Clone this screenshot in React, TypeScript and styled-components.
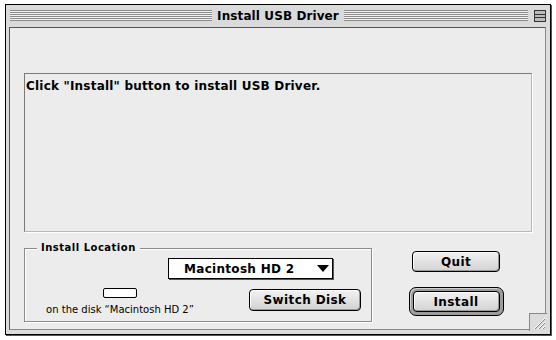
import styled, { createGlobalStyle } from 'styled-components'

const Global = createGlobalStyle`
	body {
		margin: 0;
		background: #ffffff;
		font-family: "DejaVu Sans", "Liberation Sans", sans-serif;
	}
`

const Page = styled.div`
	width: 556px;
	height: 340px;
	padding: 4px 0 0 5px;
	box-sizing: border-box;
`

const Window = styled.div`
	position: relative;
	width: 546px;
	height: 331px;
	box-sizing: border-box;
	border: 1px solid #000;
	box-shadow: 1px 1px 0 #555;
	background: #dcdcdc;
	display: flex;
	flex-direction: column;
`

const TitleBar = styled.div`
	height: 21px;
	display: grid;
	grid-template-columns: 1fr auto 1fr;
	align-items: center;
	padding: 0 4px;
	background: #dadada;
`

const TitleSide = styled.div`
	display: flex;
	align-items: center;
	gap: 6px;
`

const Stripes = styled.div`
	flex: 1;
	height: 11px;
	background: repeating-linear-gradient(
		to bottom,
		#8a8a8a 0px,
		#8a8a8a 1px,
		#f4f4f4 1px,
		#f4f4f4 2px
	);
`

const Title = styled.div`
	font-weight: bold;
	font-size: 12px;
	letter-spacing: 0.1px;
	color: #000;
	padding: 0 5px;
	white-space: nowrap;
`

const CollapseBox = styled.div`
	width: 10px;
	height: 10px;
	border: 1px solid #333;
	background: linear-gradient(to bottom, #bbb 0, #bbb 3px, #333 3px, #333 4px, #bbb 4px, #bbb 6px, #333 6px, #333 7px, #bbb 7px);
`

const Frame = styled.div`
	flex: 1;
	margin: 1px 4px 4px 3px;
	border: 1px solid #555;
	border-right-color: #888;
	border-bottom-color: #888;
	background: #ececec;
	display: flex;
	flex-direction: column;
	padding: 45px 13px 7px 14px;
	box-sizing: border-box;
`

const MessageBox = styled.div`
	height: 159px;
	box-sizing: border-box;
	border: 1px solid #7a7a7a;
	border-right-color: #b8b8b8;
	border-bottom-color: #b8b8b8;
	box-shadow: 1px 1px 0 #fff;
	padding: 5px 0 0 1px;
	font-weight: bold;
	font-size: 12px;
	letter-spacing: 0.2px;
	color: #000;
`

const BottomRow = styled.div`
	display: flex;
	margin-top: 16px;
`

const Group = styled.div`
	position: relative;
	width: 348px;
	height: 74px;
	box-sizing: border-box;
	border: 1px solid #8c8c8c;
	box-shadow: 1px 1px 0 #fff inset, 1px 1px 0 #fff;
	display: flex;
	flex-direction: column;
`

const GroupLabel = styled.div`
	position: absolute;
	left: 12px;
	top: -7px;
	padding: 0 4px;
	background: #ececec;
	font-weight: bold;
	font-size: 10px;
	letter-spacing: 0.5px;
	color: #000;
`

const PopupRow = styled.div`
	padding: 9px 0 0 143px;
	display: flex;
`

const Popup = styled.div`
	width: 165px;
	height: 21px;
	box-sizing: border-box;
	border: 1px solid #000;
	box-shadow: 1px 1px 0 #555;
	background: #fff;
	display: flex;
	align-items: center;
	padding: 0 3px 0 15px;
	font-weight: bold;
	font-size: 12px;
	letter-spacing: 0.3px;
	color: #000;
	justify-content: space-between;
`

const Arrow = styled.div`
	width: 0;
	height: 0;
	border-left: 6px solid transparent;
	border-right: 6px solid transparent;
	border-top: 7px solid #000;
`

const LowerRow = styled.div`
	display: flex;
	align-items: flex-start;
`

const DiskCell = styled.div`
	width: 190px;
	display: flex;
	flex-direction: column;
	align-items: center;
	padding-top: 9px;
	gap: 6px;
`

const DiskIcon = styled.div`
	width: 32px;
	height: 8px;
	border: 1px solid #000;
	border-radius: 2px;
	background: #fff;
`

const DiskCaption = styled.div`
	font-family: "DejaVu Sans", sans-serif;
	font-size: 10px;
	color: #000;
	white-space: nowrap;
`

const SwitchCell = styled.div`
	padding: 10px 0 0 34px;
`

const Button = styled.div<{ w: number, h?: number }>`
	width: ${p => p.w}px;
	height: ${p => p.h || 21}px;
	box-sizing: border-box;
	border: 1px solid #000;
	border-radius: 4px;
	background: linear-gradient(to bottom, #f2f2f2, #d2d2d2);
	box-shadow: inset 1px 1px 0 #fff, inset -1px -1px 0 #9a9a9a;
	display: flex;
	align-items: center;
	justify-content: center;
	font-weight: bold;
	font-size: 12px;
	letter-spacing: 0.4px;
	color: #000;
`

const DefaultRing = styled.div`
	padding: 3px;
	border: 1px solid #000;
	border-radius: 7px;
	background: #9c9c9c;
	box-shadow: inset 1px 1px 0 #d0d0d0;
`

const Buttons = styled.div`
	flex: 1;
	display: flex;
	flex-direction: column;
	align-items: center;
	padding-top: 3px;
	gap: 15px;
	padding-left: 8px;
`

const Grip = styled.div`
	position: absolute;
	right: 3px;
	bottom: 3px;
	width: 17px;
	height: 17px;
	background: #dcdcdc;
	border-top: 1px solid #888;
	border-left: 1px solid #888;
`

export default function App() {
	return (
		<>
			<Global />
			<Page>
				<Window>
					<TitleBar>
						<TitleSide>
							<Stripes />
						</TitleSide>
						<Title>Install USB Driver</Title>
						<TitleSide>
							<Stripes />
							<CollapseBox />
						</TitleSide>
					</TitleBar>
					<Frame>
						<MessageBox>Click "Install" button to install USB Driver.</MessageBox>
						<BottomRow>
							<Group>
								<GroupLabel>Install Location</GroupLabel>
								<PopupRow>
									<Popup>
										<span>Macintosh HD 2</span>
										<Arrow />
									</Popup>
								</PopupRow>
								<LowerRow>
									<DiskCell>
										<DiskIcon />
										<DiskCaption>on the disk “Macintosh HD 2”</DiskCaption>
									</DiskCell>
									<SwitchCell>
										<Button w={112} h={22}>Switch Disk</Button>
									</SwitchCell>
								</LowerRow>
							</Group>
							<Buttons>
								<Button w={88}>Quit</Button>
								<DefaultRing>
									<Button w={87}>Install</Button>
								</DefaultRing>
							</Buttons>
						</BottomRow>
					</Frame>
					<Grip>
						<svg width="17" height="17" viewBox="0 0 17 17">
							<g stroke="#fff" strokeWidth="1">
								<line x1="4" y1="15" x2="15" y2="4" />
								<line x1="8" y1="15" x2="15" y2="8" />
								<line x1="12" y1="15" x2="15" y2="12" />
							</g>
							<g stroke="#888" strokeWidth="1">
								<line x1="5" y1="15" x2="15" y2="5" />
								<line x1="9" y1="15" x2="15" y2="9" />
								<line x1="13" y1="15" x2="15" y2="13" />
							</g>
						</svg>
					</Grip>
				</Window>
			</Page>
		</>
	)
}
